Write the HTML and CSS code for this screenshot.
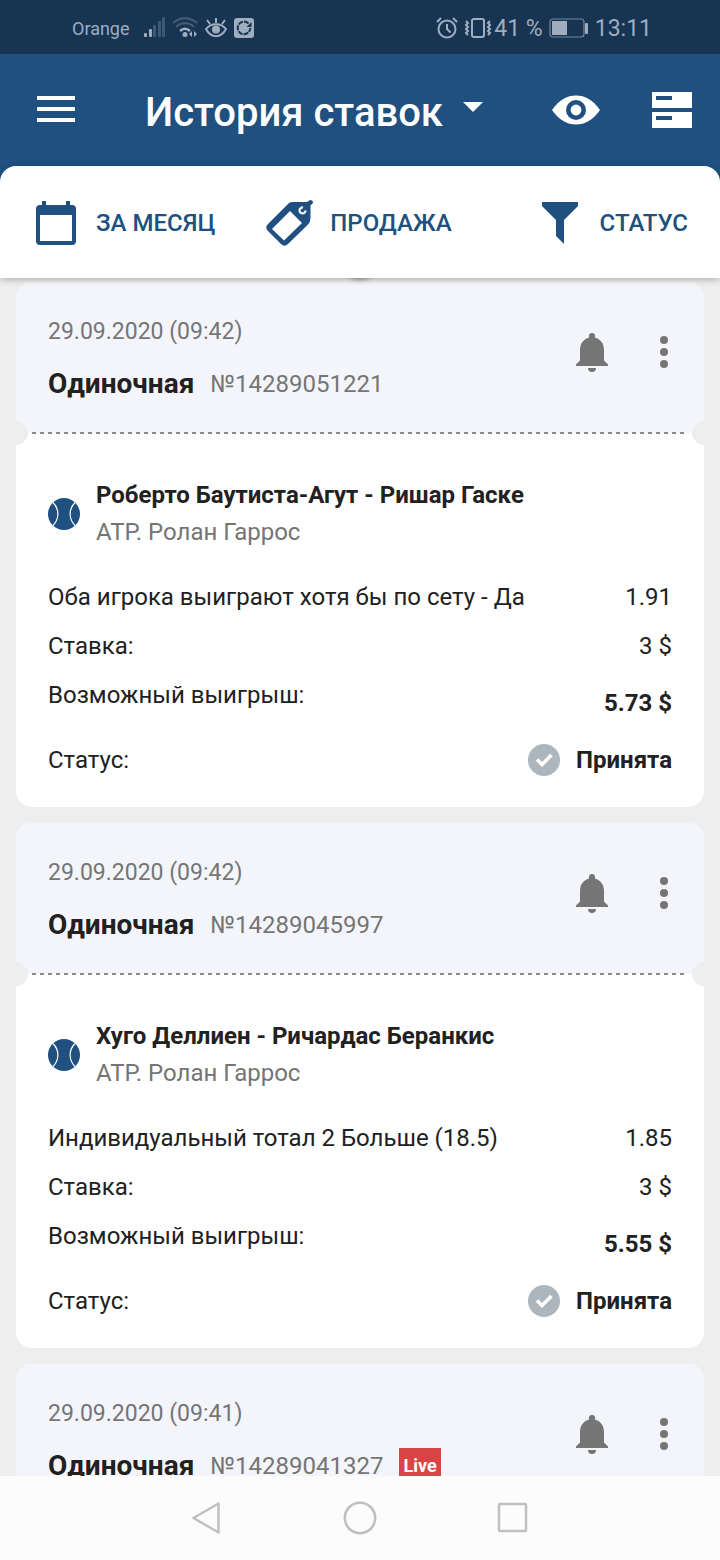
FILE: index.html
```html
<!DOCTYPE html>
<html lang="ru">

<head>
    <meta charset="UTF-8">
    <meta name="viewport" content="width=device-width, initial-scale=1.0">
    <title>История ставок</title>
    <link rel="stylesheet" href="styles.css">
</head>

<body>
    <!-- Shared icons -->
    <svg class="icon-defs" aria-hidden="true">
        <symbol id="icon-bell" viewBox="0 -1 32 40">
            <path d="M0 33 V31.500 L4 27.500 V17 C4 10.500 7.500 6 13 4.500 V3 A3 3 0 0 1 19 3 V4.500 C24.500 6 28 10.500 28 17 V27.500 L32 31.500 V33 Z M12 35 H20 A4 4 0 0 1 12 35 Z" />
        </symbol>
        <symbol id="icon-more" viewBox="0 0 8 32">
            <circle cx="4" cy="4" r="4" />
            <circle cx="4" cy="16" r="4" />
            <circle cx="4" cy="28" r="4" />
        </symbol>
        <symbol id="icon-tennis" viewBox="0 0 32 32">
            <circle cx="16" cy="16" r="16" fill="#20507f" />
            <path d="M5 4.500 C11.500 11 11.500 21 5 27.500 M27 4.500 C20.500 11 20.500 21 27 27.500" fill="none" stroke="#fff" stroke-width="1.200" />
        </symbol>
        <symbol id="icon-accepted" viewBox="0 0 32 32">
            <circle cx="16" cy="16" r="16" fill="#adb5bd" />
            <path d="M9 15.500 L14 20.500 L23.500 11" fill="none" stroke="#fff" stroke-width="3.600" />
        </symbol>
    </svg>

    <div class="status-bar">
        <div class="status-left">
            <span class="carrier">Orange</span>
            <svg width="22" height="22" viewBox="0 0 22 22">
                <rect x="0" y="16" width="3" height="4" rx="1" />
                <rect x="5" y="12" width="3" height="8" rx="1" />
                <g opacity="0.300">
                    <rect x="9" y="8" width="3" height="12" rx="1" />
                    <rect x="14" y="4" width="3" height="16" rx="1" />
                    <rect x="18" y="0" width="3" height="20" rx="1" />
                </g>
            </svg>
            <svg width="26" height="22" viewBox="0 0 26 22">
                <g fill="none" stroke="#a0adbe" stroke-width="2">
                    <path d="M1 6 C8 -0.500 18 -0.500 25 6 M4 10 C9 5 17 5 22 10" opacity="0.350" />
                    <path d="M8 14 C11 11 15 11 18 14" stroke-width="2.500" />
                </g>
                <circle cx="13" cy="17.500" r="2.500" />
                <path d="M20 14 V20 L17 17 Z M22 14 V20 L25 17 Z" />
            </svg>
            <svg width="24" height="22" viewBox="0 0 24 22">
                <path d="M2 12 C7 5.500 17 5.500 22 12 C17 21.500 7 21.500 2 12 Z M12 1 V6 M3 3 L6 7 M21 3 L18 7" fill="none" stroke="#a0adbe" stroke-width="2" />
                <circle cx="12" cy="12.500" r="4" />
            </svg>
            <svg width="20" height="20" viewBox="0 0 20 20">
                <rect width="20" height="20" rx="3" />
                <path d="M14.500 5.500 A6.300 6.300 0 1 0 16.300 10" fill="none" stroke="#173453" stroke-width="2" stroke-dasharray="5 1" />
                <path d="M17.500 4 V9 H12.500 Z" fill="#173453" />
            </svg>
        </div>
        <div class="status-right">
            <svg width="22" height="22" viewBox="0 0 22 22">
                <g fill="none" stroke="#a0adbe" stroke-width="2">
                    <circle cx="11" cy="12" r="8.500" />
                    <path d="M11 7 V12 L14.500 15.500 M1 5 L5 1 M21 5 L17 1" />
                </g>
            </svg>
            <svg class="vibrate" width="28" height="22" viewBox="0 0 28 22">
                <g fill="none" stroke="#a0adbe" stroke-width="2">
                    <rect x="8" y="2" width="12" height="18" rx="2" />
                    <path d="M2 4 L4 6 L2 8 L4 10 L2 12 L4 14 L2 16 L4 18 M26 4 L24 6 L26 8 L24 10 L26 12 L24 14 L26 16 L24 18" />
                </g>
            </svg>
            <span class="battery-level">41 %</span>
            <svg width="40" height="20" viewBox="0 0 40 20">
                <rect x="1" y="1" width="34" height="18" rx="3" fill="none" stroke="#a0adbe" opacity="0.700" stroke-width="1.200" />
                <rect x="3" y="3" width="15" height="14" />
                <rect x="36" y="5" width="3" height="11" rx="1" />
            </svg>
            <span class="clock">13:11</span>
        </div>
    </div>

    <header class="header">
        <button class="icon-btn" type="button" aria-label="Меню">
            <svg width="38" height="28" viewBox="0 0 38 28">
                <path d="M0 0 H38 V4 H0 Z M0 11 H38 V15 H0 Z M0 22 H38 V26 H0 Z" />
            </svg>
        </button>
        <h1>
            <button class="title-btn" type="button">
                История ставок
                <svg width="20" height="10" viewBox="0 0 20 10">
                    <path d="M0 0 H20 L10 10 Z" />
                </svg>
            </button>
        </h1>
        <div class="header-actions">
            <button class="icon-btn" type="button" aria-label="Показать">
                <svg width="48" height="30" viewBox="0 0 48 30">
                    <path d="M0 15 C7 5 15 0.500 24 0.500 S41 5 48 15 C41 25 33 29.500 24 29.500 S7 25 0 15 Z" />
                    <circle cx="24" cy="15" r="10" fill="#20507f" />
                    <circle cx="24" cy="15" r="5.400" />
                </svg>
            </button>
            <button class="icon-btn" type="button" aria-label="Вид списка">
                <svg width="40" height="36" viewBox="0 0 40 36">
                    <path fill-rule="evenodd" d="M0 0 H40 V16 H0 Z M4 4 V8 H20 V4 Z M0 20 H40 V36 H0 Z M4 24 V28 H20 V24 Z" />
                </svg>
            </button>
        </div>
    </header>

    <div class="filters-wrap">
        <span class="refresh"></span>
        <nav class="filters">
            <button class="filter" type="button">
                <svg width="40" height="44" viewBox="0 0 40 44">
                    <path fill-rule="evenodd" d="M6 0 H10 V4 H30 V0 H34 V4 H36 A4 4 0 0 1 40 8 V40 A4 4 0 0 1 36 44 H4 A4 4 0 0 1 0 40 V8 A4 4 0 0 1 4 4 H6 Z M4 14 V40 H36 V14 Z" />
                </svg>
                За месяц
            </button>
            <button class="filter filter-sale" type="button">
                <svg width="48" height="46" viewBox="0 0 48 46">
                    <path fill-rule="evenodd" d="M23 3 Q24.500 2 27 2 H41 L44 0 Q47 0 47 3 L44.500 5.500 V18 Q44.500 22 42 24.500 L22 44 Q18.500 47.500 15 44 L2 31 Q-1.500 27.500 2 24 Z M24 11 L6 29 L18 40.500 L36 23 Z" />
                    <path d="M37 7.500 A3 3 0 1 0 39.500 10.500" fill="none" stroke="#fff" stroke-width="2.200" />
                </svg>
                Продажа
            </button>
            <button class="filter filter-status" type="button">
                <svg width="36" height="42" viewBox="0 0 36 42">
                    <path d="M0 0 H36 V4 L22 18 V42 L14 34 V18 L0 4 Z" />
                </svg>
                Статус
            </button>
        </nav>
    </div>

    <main class="bets">
        <article class="card">
            <div class="card-header">
                <div class="card-info">
                    <time>29.09.2020 (09:42)</time>
                    <div class="card-title">
                        <h2>Одиночная</h2>
                        <span>№14289051221</span>
                    </div>
                </div>
                <div class="card-actions">
                    <button class="icon-btn" type="button" aria-label="Уведомления"><svg width="32" height="40"><use href="#icon-bell" /></svg></button>
                    <button class="icon-btn" type="button" aria-label="Ещё"><svg width="8" height="32"><use href="#icon-more" /></svg></button>
                </div>
            </div>
            <div class="card-body">
                <div class="match">
                    <svg width="32" height="32"><use href="#icon-tennis" /></svg>
                    <div>
                        <h3>Роберто Баутиста-Агут - Ришар Гаске</h3>
                        <p>ATP. Ролан Гаррос</p>
                    </div>
                </div>
                <dl>
                    <div class="row">
                        <dt>Оба игрока выиграют хотя бы по сету - Да</dt>
                        <dd>1.91</dd>
                    </div>
                    <div class="row">
                        <dt>Ставка:</dt>
                        <dd>3 $</dd>
                    </div>
                    <div class="row row-win">
                        <dt>Возможный выигрыш:</dt>
                        <dd>5.73 $</dd>
                    </div>
                    <div class="row row-status">
                        <dt>Статус:</dt>
                        <dd><svg width="32" height="32"><use href="#icon-accepted" /></svg>Принята</dd>
                    </div>
                </dl>
            </div>
        </article>

        <article class="card">
            <div class="card-header">
                <div class="card-info">
                    <time>29.09.2020 (09:42)</time>
                    <div class="card-title">
                        <h2>Одиночная</h2>
                        <span>№14289045997</span>
                    </div>
                </div>
                <div class="card-actions">
                    <button class="icon-btn" type="button" aria-label="Уведомления"><svg width="32" height="40"><use href="#icon-bell" /></svg></button>
                    <button class="icon-btn" type="button" aria-label="Ещё"><svg width="8" height="32"><use href="#icon-more" /></svg></button>
                </div>
            </div>
            <div class="card-body">
                <div class="match">
                    <svg width="32" height="32"><use href="#icon-tennis" /></svg>
                    <div>
                        <h3>Хуго Деллиен - Ричардас Беранкис</h3>
                        <p>ATP. Ролан Гаррос</p>
                    </div>
                </div>
                <dl>
                    <div class="row">
                        <dt>Индивидуальный тотал 2 Больше (18.5)</dt>
                        <dd>1.85</dd>
                    </div>
                    <div class="row">
                        <dt>Ставка:</dt>
                        <dd>3 $</dd>
                    </div>
                    <div class="row row-win">
                        <dt>Возможный выигрыш:</dt>
                        <dd>5.55 $</dd>
                    </div>
                    <div class="row row-status">
                        <dt>Статус:</dt>
                        <dd><svg width="32" height="32"><use href="#icon-accepted" /></svg>Принята</dd>
                    </div>
                </dl>
            </div>
        </article>

        <article class="card">
            <div class="card-header">
                <div class="card-info">
                    <time>29.09.2020 (09:41)</time>
                    <div class="card-title">
                        <h2>Одиночная</h2>
                        <span>№14289041327</span>
                        <span class="live">Live</span>
                    </div>
                </div>
                <div class="card-actions">
                    <button class="icon-btn" type="button" aria-label="Уведомления"><svg width="32" height="40"><use href="#icon-bell" /></svg></button>
                    <button class="icon-btn" type="button" aria-label="Ещё"><svg width="8" height="32"><use href="#icon-more" /></svg></button>
                </div>
            </div>
        </article>
    </main>

    <div class="system-nav">
        <button type="button" aria-label="Назад">
            <svg width="32" height="36" viewBox="1 0 32 36">
                <path d="M28.500 3.500 V32.500 L3.500 18 Z" />
            </svg>
        </button>
        <button type="button" aria-label="Домой">
            <svg width="36" height="36" viewBox="0 0 36 36">
                <circle cx="18" cy="18" r="15.200" />
            </svg>
        </button>
        <button type="button" aria-label="Недавние">
            <svg width="36" height="36" viewBox="0 0 36 36">
                <rect x="4" y="4" width="27" height="27" rx="1" />
            </svg>
        </button>
    </div>
</body>

</html>
```

FILE: styles.css
```css
* {
    margin: 0;
    padding: 0;
    box-sizing: border-box;
}

body {
    display: flex;
    flex-direction: column;
    height: 100vh;
    overflow: hidden;
    font-family: Roboto, sans-serif;
    font-size: 24px;
    background-color: #eee;
    color: #212121;
}

button {
    border: none;
    background: none;
    font: inherit;
    color: inherit;
    cursor: pointer;
}

svg {
    display: block;
    flex-shrink: 0;
    fill: currentColor;
}

.icon-defs {
    position: absolute;
    width: 0;
    height: 0;
}

/* Status bar */
.status-bar {
    display: flex;
    justify-content: space-between;
    align-items: center;
    flex-shrink: 0;
    height: 54px;
    padding: 2px 68px 0 72px;
    background-color: #173453;
    color: #a0adbe;
}

.status-left,
.status-right {
    display: flex;
    align-items: center;
    gap: 6px;
}

.carrier {
    margin-right: 8px;
    font-size: 18px;
}

.battery-level,
.clock {
    font-size: 23px;
}

.vibrate {
    margin-right: -4px;
}

/* Header */
.header {
    display: flex;
    align-items: center;
    flex-shrink: 0;
    height: 112px;
    padding: 0 28px 0 37px;
    background-color: #20507f;
    color: #fff;
}

.header h1 {
    padding-top: 6px;
    margin-left: 70px;
    font-size: 40px;
    font-weight: 500;
}

.title-btn {
    display: flex;
    align-items: center;
    gap: 20px;
    line-height: 48px;
}

.title-btn svg {
    margin-bottom: 12px;
}

.header-actions {
    display: flex;
    align-items: center;
    gap: 52px;
    margin-left: auto;
}

/* Filters */
.filters-wrap {
    position: relative;
    z-index: 1;
    flex-shrink: 0;
    background: linear-gradient(#20507f 50%, transparent 50%);
}

.refresh {
    position: absolute;
    bottom: 0;
    left: 50%;
    width: 40px;
    height: 40px;
    margin-left: -20px;
    border-radius: 50%;
    box-shadow: 0 2px 4px rgba(0, 0, 0, 0.3);
}

.filters {
    position: relative;
    display: flex;
    align-items: center;
    gap: 51px;
    height: 112px;
    padding: 2px 32px 0 36px;
    background-color: #fff;
    border-radius: 16px 16px 0 0;
    box-shadow: 0 2px 6px rgba(0, 0, 0, 0.25);
    color: #20507f;
}

.filter {
    display: flex;
    align-items: center;
    gap: 20px;
    font-weight: 500;
    text-transform: uppercase;
}

.filter-sale {
    gap: 16px;
}

.filter-status {
    gap: 22px;
    margin-left: auto;
}

/* Bets list */
.bets {
    display: flex;
    flex-direction: column;
    flex: 1;
    gap: 16px;
    min-height: 0;
    padding: 4px 16px 0;
    overflow: hidden;
}

.card {
    flex-shrink: 0;
    background-color: #fff;
    border-radius: 16px;
    overflow: hidden;
}

.card-header {
    position: relative;
    display: flex;
    justify-content: space-between;
    padding: 32px 32px 31px;
    background-color: #f4f5fa;
    line-height: 36px;
    color: #757575;
}

/* Round cut-outs and the dashed tear line */
.card-header::before {
    content: "";
    position: absolute;
    z-index: 1;
    left: 0;
    right: 0;
    bottom: -12px;
    height: 24px;
    background:
        radial-gradient(circle at 0 50%, #eee 12px, transparent 12px),
        radial-gradient(circle at 100% 50%, #eee 12px, transparent 12px);
}

.card-header::after {
    content: "";
    position: absolute;
    z-index: 1;
    left: 16px;
    right: 16px;
    bottom: -1px;
    height: 2px;
    background: repeating-linear-gradient(to right, #8a8a8a 0 4px, transparent 4px 8px);
}

.card-info {
    display: flex;
    flex-direction: column;
    gap: 16px;
}

.card-info time {
    font-size: 23px;
}

.card-title {
    display: flex;
    align-items: center;
    gap: 16px;
}

.card-title h2 {
    font-size: 28px;
    font-weight: 700;
    color: #212121;
}

.live {
    padding: 0 4px;
    background-color: #d94444;
    color: #fff;
    font-size: 18px;
    font-weight: 700;
}

.card-actions {
    display: flex;
    align-items: center;
    gap: 52px;
    height: 76px;
    padding-right: 4px;
}

.card-body {
    padding: 44px 32px 22px;
}

.match {
    display: flex;
    align-items: center;
    gap: 16px;
    margin-bottom: 22px;
    line-height: 37px;
}

.match h3 {
    font-size: 24px;
    font-weight: 700;
}

.match p {
    color: #757575;
}

.row {
    display: flex;
    justify-content: space-between;
    line-height: 49px;
}

.row-win dd {
    line-height: 65px;
    font-weight: 700;
}

.row-status dd {
    display: flex;
    align-items: center;
    gap: 16px;
    font-weight: 700;
}

.row-status svg {
    margin-bottom: 2px;
}

/* System navigation */
.system-nav {
    display: flex;
    justify-content: center;
    align-items: center;
    gap: 105px;
    flex-shrink: 0;
    height: 84px;
    background-color: #fcfcfc;
}

.system-nav button {
    display: flex;
    justify-content: center;
    width: 48px;
}

.system-nav svg {
    fill: none;
    stroke: #c0c0c0;
    stroke-width: 2.5px;
    stroke-linejoin: round;
}
```
